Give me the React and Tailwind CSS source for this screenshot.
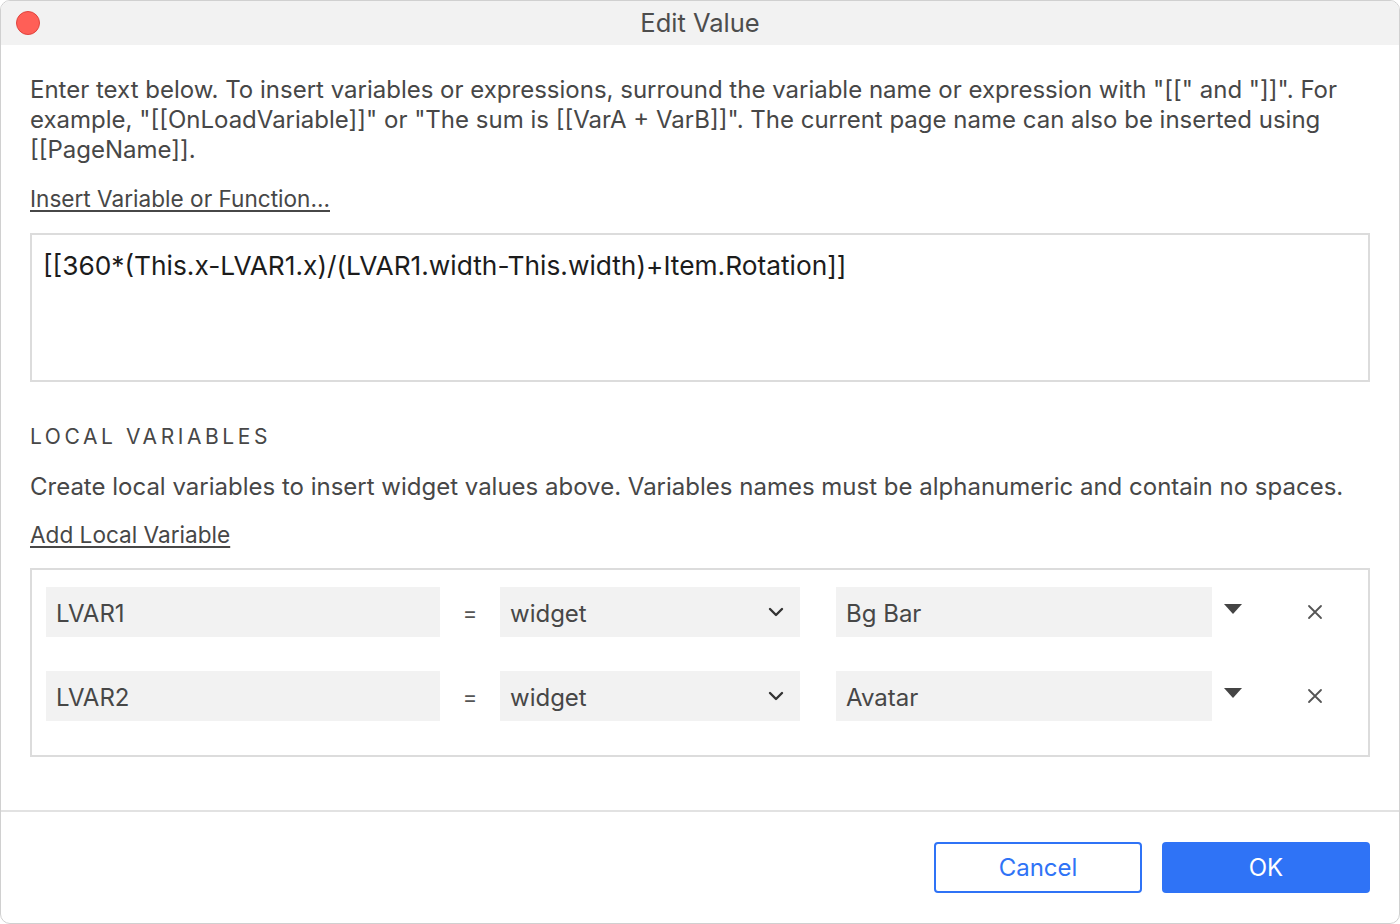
import React from "react";

const rows = [
  { name: "LVAR1", kind: "widget", target: "Bg Bar" },
  { name: "LVAR2", kind: "widget", target: "Avatar" },
];

const Chevron = () => (
  <svg width="16" height="10" viewBox="0 0 16 10" fill="none">
    <path d="M2 2l6 6 6-6" stroke="#333" strokeWidth="2.4" strokeLinecap="round" strokeLinejoin="round" />
  </svg>
);

const Caret = () => (
  <svg width="18" height="12" viewBox="0 0 18 12">
    <path d="M0 1h18L9 11z" fill="#444" />
  </svg>
);

const Close = () => (
  <svg width="16" height="16" viewBox="0 0 16 16">
    <path d="M2 2l12 12M14 2L2 14" stroke="#555" strokeWidth="1.8" strokeLinecap="round" />
  </svg>
);

const App = () => {
  return (
    <div className="h-[924px] w-[1400px] bg-white" style={{ fontFamily: "Inter, 'Noto Sans', sans-serif" }}>
      <div className="flex h-full flex-col overflow-hidden rounded-[10px] border border-[#d0d0d0] bg-white">
        {/* title bar */}
        <div className="relative flex h-[44px] shrink-0 items-center justify-center bg-[#f2f2f2]">
          <span className="absolute left-[15px] top-[10px] h-[24px] w-[24px] rounded-full border border-[#e0443e] bg-[#ff5f57]" />
          <span className="text-[25.5px] text-[#4d4d4d]">Edit Value</span>
        </div>

        <div className="flex flex-1 flex-col px-[29px] pt-[30px]">
          <p className="text-[24px] leading-[30px] text-[#474747]">
            Enter text below. To insert variables or expressions, surround the variable name or expression with "[[" and "]]". For example, "[[OnLoadVariable]]" or "The sum is [[VarA + VarB]]". The current page name can also be inserted using [[PageName]].
          </p>
          <a className="mt-[19px] self-start text-[22.6px] leading-[30px] text-[#474747] underline underline-offset-[3px]">
            Insert Variable or Function...
          </a>

          <div className="mt-[19px] h-[149px] border-2 border-[#dcdcdc] px-[11px] pt-[16px] text-[26.3px] leading-[30px] text-[#1c1c1c]">
            [[360*(This.x-LVAR1.x)/(LVAR1.width-This.width)+Item.Rotation]]
          </div>

          <h3 className="mt-[40px] text-[21px] leading-[30px] tracking-[0.17em] text-[#474747]">LOCAL VARIABLES</h3>
          <p className="mt-[20px] text-[24px] leading-[30px] text-[#474747]">
            Create local variables to insert widget values above. Variables names must be alphanumeric and contain no spaces.
          </p>
          <a className="mt-[18px] self-start text-[22.6px] leading-[30px] text-[#474747] underline underline-offset-[3px]">
            Add Local Variable
          </a>

          <div className="mt-[18px] flex h-[189px] flex-col gap-[34px] border-2 border-[#dcdcdc] px-[14px] pt-[17px]">
            {rows.map((r) => (
              <div key={r.name} className="flex h-[50px] items-center">
                <div className="flex h-full w-[394px] items-center bg-[#f2f2f2] px-[10px] pt-[3px] text-[24px] text-[#474747]">{r.name}</div>
                <div className="w-[60px] pt-[3px] text-center text-[22px] text-[#555]">=</div>
                <div className="flex h-full w-[300px] items-center justify-between bg-[#f2f2f2] pl-[10px] pr-[16px] text-[24px] text-[#474747]">
                  <span className="pt-[3px]">{r.kind}</span>
                  <Chevron />
                </div>
                <div className="ml-[36px] flex h-full w-[376px] items-center bg-[#f2f2f2] px-[10px] pt-[3px] text-[24px] text-[#474747]">{r.target}</div>
                <div className="ml-[12px] flex h-full w-[18px] items-start pt-[16px]">
                  <Caret />
                </div>
                <button className="ml-[65px] flex h-full items-center">
                  <Close />
                </button>
              </div>
            ))}
          </div>
        </div>

        <div className="flex h-[113px] shrink-0 items-center justify-end gap-[20px] border-t-2 border-[#e2e2e2] pr-[29px]">
          <button className="h-[51px] w-[208px] rounded-[4px] border-2 border-[#2f73f6] text-[24px] text-[#2f73f6]">Cancel</button>
          <button className="h-[51px] w-[208px] rounded-[4px] bg-[#2f73f6] text-[24px] text-white">OK</button>
        </div>
      </div>
    </div>
  );
};

export default App;
